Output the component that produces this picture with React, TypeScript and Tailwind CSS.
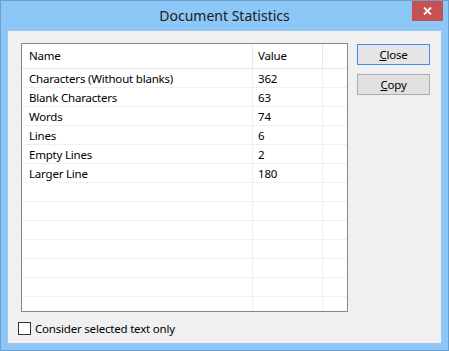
import React from "react";

const rows: [string, string][] = [
  ["Characters (Without blanks)", "362"],
  ["Blank Characters", "63"],
  ["Words", "74"],
  ["Lines", "6"],
  ["Empty Lines", "2"],
  ["Larger Line", "180"],
  ["", ""],
  ["", ""],
  ["", ""],
  ["", ""],
  ["", ""],
  ["", ""],
  ["", ""],
];

const font = { fontFamily: '"Noto Sans", "Open Sans", sans-serif' };

export default function App() {
  return (
    <div
      className="w-[449px] h-[351px] bg-[#8cc7f8] border border-[#6b9fd0] flex flex-col text-black"
      style={font}
    >
      {/* title bar */}
      <div className="relative h-[29px] flex items-center justify-center">
        <span className="text-[14px] text-[#202020] leading-none mt-[1px]">Document Statistics</span>
        <div className="absolute right-[5px] top-0 w-[31px] h-[20px] bg-[#c75050] flex items-center justify-center">
          <svg width="9" height="8" viewBox="0 0 9 8">
            <path d="M1 0.5 L8 7.5 M8 0.5 L1 7.5" stroke="#fff" strokeWidth="1.8" />
          </svg>
        </div>
      </div>
      {/* client */}
      <div className="mx-[6px] h-[314px] border border-[#9fc6ea] bg-[#f0f0f0] flex flex-col text-[11.5px] tracking-[-0.2px]">
        <div className="flex pt-[12px] pl-[13px]">
          {/* list */}
          <div className="w-[327px] h-[269px] border border-[#828790] bg-white overflow-hidden">
            <div className="flex h-[25px] border-b border-[#e5e5e5]">
              <div className="w-[231px] pl-[7px] flex items-center border-r border-[#e3eaf3]">Name</div>
              <div className="w-[70px] pl-[5px] flex items-center border-r border-[#e3eaf3]">Value</div>
              <div className="flex-1" />
            </div>
            {rows.map(([n, v], i) => (
              <div key={i} className="flex h-[19px] border-b border-[#f0f0f0]">
                <div className="w-[231px] pl-[7px] pt-[1px] flex items-center border-r border-[#f0f0f0] whitespace-nowrap">{n}</div>
                <div className="w-[70px] pl-[5px] pt-[1px] flex items-center border-r border-[#f0f0f0]">{v}</div>
                <div className="flex-1" />
              </div>
            ))}
          </div>
          {/* buttons */}
          <div className="ml-[9px] pt-[1px] flex flex-col gap-[9px]">
            <button className="w-[73px] h-[21px] border border-[#3c8ee6] bg-[#e5e5e5] flex items-center justify-center">
              <span><span className="underline">C</span>lose</span>
            </button>
            <button className="w-[73px] h-[21px] border border-[#adadad] bg-[#e1e1e1] flex items-center justify-center">
              <span><span className="underline">C</span>opy</span>
            </button>
          </div>
        </div>
        <div className="flex items-center pl-[10px] mt-[8px] gap-[4px]">
          <div className="w-[13px] h-[13px] border border-[#333333] bg-white" />
          <span>Consider selected text only</span>
        </div>
      </div>
    </div>
  );
}
